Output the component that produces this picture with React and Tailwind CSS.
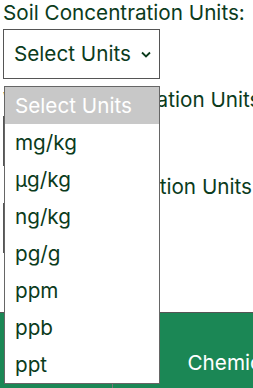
import { useState } from "react";

const units = ["mg/kg", "µg/kg", "ng/kg", "pg/g", "ppm", "ppb", "ppt"];

function UnitSelect({ label }) {
  return (
    <div className="flex flex-col">
      <div className="whitespace-nowrap text-[20.7px] leading-[26px] text-[#0b3b1c]">{label}</div>
      <div className="mt-[3px] flex h-[50px] w-[157px] items-center justify-between border border-[#555] bg-white pl-[10px] pr-[8px] text-[20.7px] text-[#0b3b1c]">
        <span>Select Units</span>
        <svg width="10" height="7" viewBox="0 0 10 7" fill="none" stroke="#0b3b1c" strokeWidth="1.8">
          <path d="M1 1.5l4 4 4-4" />
        </svg>
      </div>
    </div>
  );
}

export default function App() {
  const [open] = useState(true);

  return (
    <div className="relative h-[388px] w-[253px] overflow-hidden bg-white font-['Inter',sans-serif]">
      <div className="flex flex-col gap-[8px] pl-[3px]">
        <UnitSelect label="Soil Concentration Units:" />
        <UnitSelect label="Water Concentration Units:" />
        <UnitSelect label="Plant Concentration Units:" />
      </div>

      <table className="mt-[59px] w-[360px] border-collapse border-t border-[#555] bg-[#1b8755] text-[20.7px] text-white">
        <thead>
          <tr>
            <th className="h-[100px] w-[112px] border-r border-[#777] px-2 font-normal leading-[24px]">
              Sample Number
            </th>
            <th className="px-2 pl-[75px] text-left font-normal">Chemical</th>
          </tr>
        </thead>
      </table>

      {open && (
        <div className="absolute left-[4px] top-[86px] w-[156px] border border-[#666] bg-white text-[20.7px] text-[#0b3b1c]">
          <div className="flex h-[37px] items-center bg-[#c8c8c8] pl-[10px] text-white">Select Units</div>
          {units.map((u) => (
            <div key={u} className="flex h-[37px] items-center pl-[10px]">
              {u}
            </div>
          ))}
        </div>
      )}
    </div>
  );
}
